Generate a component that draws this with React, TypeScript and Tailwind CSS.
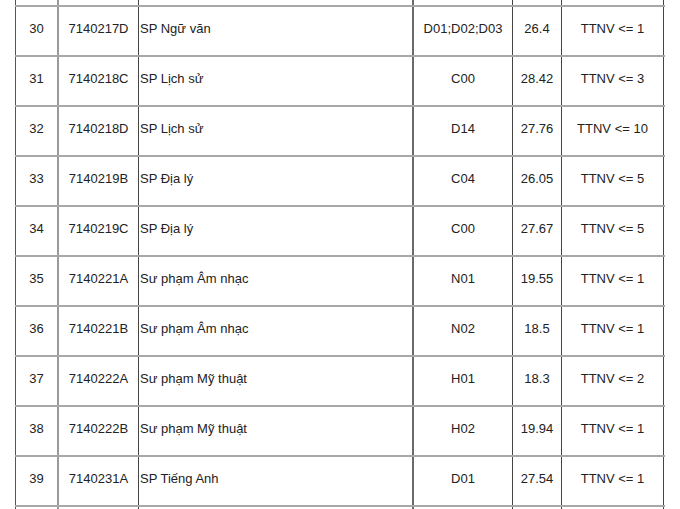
import React from 'react';

type Row = [string, string, string, string, string, string];

const rows: Row[] = [
  ['30', '7140217D', 'SP Ngữ văn', 'D01;D02;D03', '26.4', 'TTNV <= 1'],
  ['31', '7140218C', 'SP Lịch sử', 'C00', '28.42', 'TTNV <= 3'],
  ['32', '7140218D', 'SP Lịch sử', 'D14', '27.76', 'TTNV <= 10'],
  ['33', '7140219B', 'SP Địa lý', 'C04', '26.05', 'TTNV <= 5'],
  ['34', '7140219C', 'SP Địa lý', 'C00', '27.67', 'TTNV <= 5'],
  ['35', '7140221A', 'Sư phạm Âm nhạc', 'N01', '19.55', 'TTNV <= 1'],
  ['36', '7140221B', 'Sư phạm Âm nhạc', 'N02', '18.5', 'TTNV <= 1'],
  ['37', '7140222A', 'Sư phạm Mỹ thuật', 'H01', '18.3', 'TTNV <= 2'],
  ['38', '7140222B', 'Sư phạm Mỹ thuật', 'H02', '19.94', 'TTNV <= 1'],
  ['39', '7140231A', 'SP Tiếng Anh', 'D01', '27.54', 'TTNV <= 1'],
];

// column cells: widths include the left rule
const Cells: React.FC<{ row?: Row }> = ({ row }) => (
  <>
    <div className="w-[42px] border-l border-[#555] flex items-center justify-center pb-[4px]">{row?.[0]}</div>
    <div className="w-[81px] border-l-2 border-[#9a9a9a] flex items-center justify-center pb-[4px]">{row?.[1]}</div>
    <div className="w-[274px] border-l border-[#444] flex items-center pl-[1px] pb-[4px]">{row?.[2]}</div>
    <div className="w-[100px] border-l-2 border-[#6a6a6a] flex items-center justify-center pb-[4px]">{row?.[3]}</div>
    <div className="w-[49px] border-l border-[#444] flex items-center justify-center pb-[4px]">{row?.[4]}</div>
    <div className="w-[103px] border-x border-[#444] flex items-center justify-center pb-[4px]">{row?.[5]}</div>
  </>
);

export default function App() {
  return (
    <div className="w-[680px] h-[509px] overflow-hidden bg-white text-[13px] text-[#222] font-['Liberation_Sans',Arial,sans-serif]">
      <div className="ml-[15px] w-[650px]">
        <div className="flex h-[7px] border-b-2 border-[#a8a8a8]">
          <Cells />
        </div>
        {rows.map((r) => (
          <div key={r[0]} className="flex h-[50px] border-b-2 border-[#a8a8a8]">
            <Cells row={r} />
          </div>
        ))}
        <div className="flex h-[10px]">
          <Cells />
        </div>
      </div>
    </div>
  );
}
